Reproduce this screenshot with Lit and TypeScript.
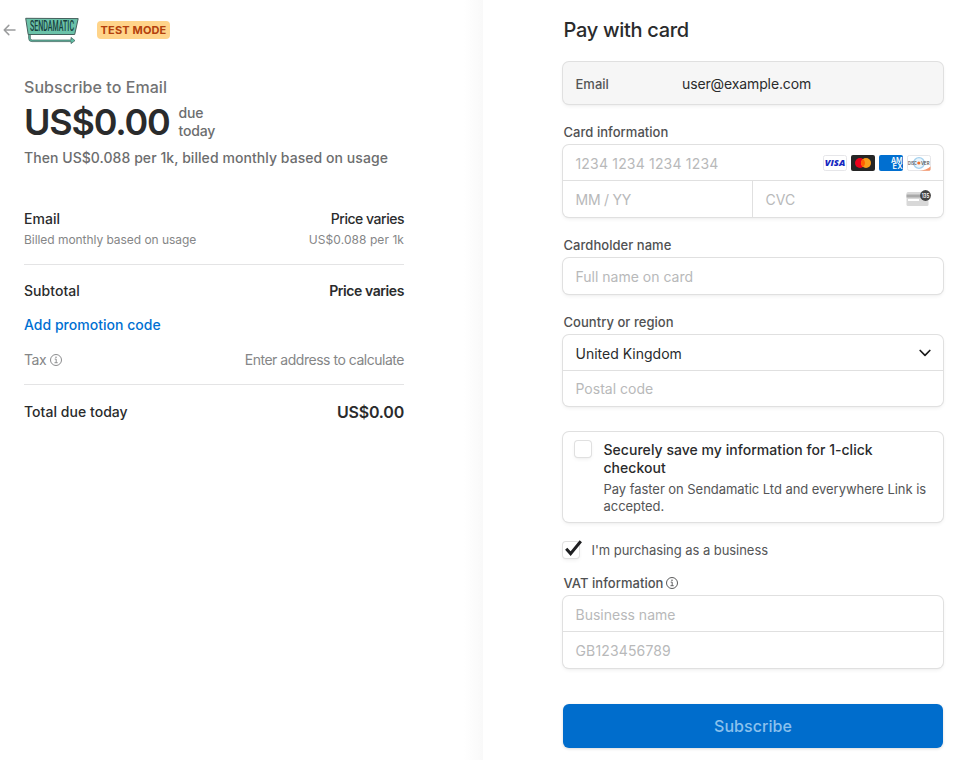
import { LitElement, html, css, svg } from "lit";
import { customElement } from "lit/decorators.js";

const infoIcon = html`<svg class="info" width="12" height="12" viewBox="0 0 12 12" fill="none" stroke="currentColor">
  <circle cx="6" cy="6" r="5.5" stroke-width="0.95" />
  <path d="M4.7 5.1h1.5v3.6M4.5 8.7h3.2" stroke-width="0.9" />
  <circle cx="6" cy="3.2" r="0.75" fill="currentColor" stroke="none" />
</svg>`;

const brandFrame = svg`<rect x="0.5" y="0.5" width="23" height="15" rx="1.8" fill="#fff" stroke="#e6e6e9" />`;

const visa = html`<svg width="24" height="16" viewBox="0 0 24 16">
  ${brandFrame}
  <text x="1.8" y="11.4" font-family="Open Sans" font-size="9" font-weight="800" font-style="italic" fill="#1527c0" textLength="20.4" lengthAdjust="spacingAndGlyphs">VISA</text>
</svg>`;

const mastercard = html`<svg width="24" height="16" viewBox="0 0 24 16">
  <rect width="24" height="16" rx="2" fill="#252525" />
  <circle cx="9" cy="8" r="5" fill="#eb001b" />
  <circle cx="15" cy="8" r="5" fill="#f79e1b" />
  <path d="M12 4a5 5 0 0 1 0 8a5 5 0 0 1 0-8z" fill="#ff5f00" />
</svg>`;

const amex = html`<svg width="24" height="16" viewBox="0 0 24 16">
  <rect width="24" height="16" rx="2" fill="#016fd0" />
  <text x="12" y="7.800" font-size="7" font-weight="600" fill="#fff" textLength="11.6" lengthAdjust="spacingAndGlyphs">AM</text>
  <text x="13.6" y="13.800" font-size="7" font-weight="600" fill="#fff" textLength="10" lengthAdjust="spacingAndGlyphs">EX</text>
</svg>`;

const discover = html`<svg width="24" height="16" viewBox="0 0 24 16">
  ${brandFrame}
  <path d="M12.5 15.8c4.500-.5 8-1.800 11-4.300v2.800a1.500 1.500 0 0 1-1.500 1.500z" fill="#f9966a" />
  <circle cx="12" cy="8" r="5.400" fill="#eaf5fc" stroke="#a3d0ee" stroke-width="1.300" />
  <text x="1" y="9.600" font-size="4.400" font-weight="600" fill="#555" textLength="8.800" lengthAdjust="spacingAndGlyphs">DISC</text>
  <circle cx="11.800" cy="8" r="1.600" fill="#f2712c" />
  <text x="14" y="9.600" font-size="4.400" font-weight="600" fill="#555" textLength="8.500" lengthAdjust="spacingAndGlyphs">VER</text>
</svg>`;

const cvcIcon = html`<svg width="25" height="17" viewBox="0 0 25 17">
  <rect x="0.500" y="2" width="22" height="14" rx="1.500" fill="#d8d8d8" />
  <rect x="0.500" y="4.500" width="22" height="3" fill="#a9a9a9" />
  <rect x="2" y="9" width="11" height="2" fill="#fff" />
  <circle cx="19.500" cy="5.500" r="5.400" fill="#424242" />
  <text x="15.700" y="7.900" font-size="6.600" font-weight="600" fill="#fff" textLength="7.600" lengthAdjust="spacingAndGlyphs">135</text>
</svg>`;

const logo = html`<svg width="54" height="27" viewBox="0 0 54 27">
  <path d="M5.300 17v4.200q0 1.800 2 1.800H46v-2.600l4 3.200-4 3v-2H7q-3.400 0-3.400-3.400V17z" fill="#5fbda4" stroke="#3c5b58" stroke-width="0.700" />
  <path d="M.7 1.300L53.200 1.600 49.700 17.500 3.200 17.500z" fill="#6bc2a9" stroke="#46605d" stroke-width="1" />
  <text x="5" y="14.300" font-family="Roboto" font-size="14.800" font-weight="500" fill="#173f3d" textLength="44" lengthAdjust="spacingAndGlyphs">SENDAMATIC</text>
</svg>`;

@customElement("summary-row")
export class SummaryRow extends LitElement {
  static styles = css`
    :host { display: flex; justify-content: space-between; align-items: center; }
  `;
  render() {
    return html`<slot name="label"></slot><slot name="value"></slot>`;
  }
}

@customElement("order-summary")
export class OrderSummary extends LitElement {
  static styles = css`
    :host { display: block; width: 380px; color: #2a2b2c; font-weight: 500; }
    svg { display: block; }
    .head { display: flex; align-items: center; height: 28px; margin-left: -21px; }
    .logo { margin-left: 9px; }
    .badge { margin-left: 18px; width: 73px; height: 18px; border-radius: 4px; background: #ffd48a;
      color: #b3400c; font-size: 11px; line-height: 19px; font-weight: 700; text-align: center; letter-spacing: .15px; white-space: nowrap; }
    .title { margin-top: 31px; height: 24px; line-height: 24px; font-size: 16px; color: #727374; letter-spacing: .06px; }
    .price { display: flex; height: 47px; align-items: center; gap: 9px; }
    .amount { font-size: 36px; font-weight: 600; line-height: 47px; letter-spacing: -1.22px; }
    .due { font-size: 14px; line-height: 18px; color: #6c6d6e; letter-spacing: -.2px; margin-top: -1.5px; }
    .then { height: 24px; line-height: 24px; font-size: 14px; color: #6c6d6e; letter-spacing: .06px; }
    .strong { font-size: 14px; line-height: 20px; letter-spacing: .04px; }
    .varies { letter-spacing: -.48px; }
    .semi { font-weight: 600; letter-spacing: -.42px; }
    .small { font-size: 12px; line-height: 16px; font-weight: 400; color: #858687; }
    .billed { letter-spacing: -.05px; }
    .per { letter-spacing: .06px; }
    .item { margin-top: 39px; }
    .detail { margin-top: 3px; }
    .line { height: 1px; background: #e4e4e5; }
    .l1 { margin-top: 16px; }
    .sub { margin-top: 16px; }
    .promo { margin-top: 14px; color: #0070d2; font-size: 14px; line-height: 20px; letter-spacing: .02px; }
    .tax { margin-top: 15px; font-size: 14px; line-height: 20px; font-weight: 400; color: #858687; }
    .taxlabel { display: flex; align-items: center; gap: 4px; letter-spacing: -.45px; }
    .enter { letter-spacing: -.48px; }
    .l2 { margin-top: 14px; }
    .total { margin-top: 17px; }
    .sum { font-size: 16px; font-weight: 600; letter-spacing: -.2px; }
  `;
  render() {
    return html`
      <div class="head">
        <svg width="13" height="12" viewBox="0 0 13 12" fill="none" stroke="#9b9c9d" stroke-width="1.500" stroke-linecap="round" stroke-linejoin="round">
          <path d="M12 6H1.200M5.800 1.400L1.200 6l4.600 4.600" />
        </svg>
        <div class="logo">${logo}</div>
        <div class="badge">TEST MODE</div>
      </div>
      <div class="title">Subscribe to Email</div>
      <div class="price"><span class="amount">US$0.00</span><span class="due">due<br />today</span></div>
      <div class="then">Then US$0.088 per 1k, billed monthly based on usage</div>
      <summary-row class="item strong"><span slot="label">Email</span><span slot="value" class="varies">Price varies</span></summary-row>
      <summary-row class="detail small"><span slot="label" class="billed">Billed monthly based on usage</span><span slot="value" class="per">US$0.088 per 1k</span></summary-row>
      <div class="line l1"></div>
      <summary-row class="sub strong"><span slot="label">Subtotal</span><span slot="value" class="semi">Price varies</span></summary-row>
      <div class="promo">Add promotion code</div>
      <summary-row class="tax"><span slot="label" class="taxlabel">Tax ${infoIcon}</span><span slot="value" class="enter">Enter address to calculate</span></summary-row>
      <div class="line l2"></div>
      <summary-row class="total strong"><span slot="label">Total due today</span><span slot="value" class="sum">US$0.00</span></summary-row>
    `;
  }
}

@customElement("payment-form")
export class PaymentForm extends LitElement {
  static styles = css`
    :host { display: block; width: 380px; color: #2a2b2c; font-size: 14px; }
    svg { display: block; }
    h1 { margin: 0; font-size: 20px; line-height: 28px; font-weight: 500; letter-spacing: -.3px; padding-left: .5px; }
    .box { border-radius: 6px; background: #fff; box-shadow: 0 0 0 1px #e0e0e0, 0 2px 4px rgba(0,0,0,.07), 0 1px 1.5px rgba(0,0,0,.05); }
    .email { margin-top: 18px; height: 42px; display: flex; align-items: center; background: #f6f6f6; }
    .email .k { width: 106.500px; padding-left: 12.500px; padding-top: 1px; font-size: 13px; font-weight: 500; color: #545556; }
    .mail { letter-spacing: -.12px; }
    .label { height: 20px; line-height: 20px; font-size: 13px; font-weight: 500; color: #505152; display: flex; align-items: center; gap: 4px; margin: 18px 0 3px; letter-spacing: .04px; padding-left: .5px; }
    .label.vat { margin-top: 14px; gap: 3px; }
    .row { height: 35px; box-sizing: border-box; padding: 1px 12px 0 12.5px; display: flex; align-items: center; justify-content: space-between; color: #b8b9ba; }
    .row + .row { border-top: 1px solid #e0e0e0; height: 37px; padding-top: 0; }
    .row.dark + .row { height: 36px; }
    .row.solo { height: 36px; }
    .split { border-top: 1px solid #e0e0e0; display: grid; grid-template-columns: 189px 1fr; }
    .split .row, .split .row + .row { border: 0; height: 36px; padding-top: 0; }
    .split .row + .row { border-left: 1px solid #e0e0e0; }
    .split .row svg { margin-top: -2px; }
    .num { letter-spacing: .18px; }
    .date { letter-spacing: -.25px; }
    .brands { display: flex; gap: 4px; margin-top: -1px; }
    .row.dark { color: #2a2b2c; }
    .vatno { letter-spacing: .15px; }
    .save { margin-top: 26px; height: 90px; box-sizing: border-box; padding: 9px 12px 0; display: flex; gap: 12.5px; }
    .check { width: 16px; height: 16px; border-radius: 3px; flex: none; background: #fff; box-shadow: 0 0 0 1px #e0e0e0, 0 2px 4px rgba(0,0,0,.07), 0 1px 1.5px rgba(0,0,0,.05); }
    .st { font-weight: 500; line-height: 18px; width: 300px; letter-spacing: .04px; }
    .sd { margin-top: 4px; font-size: 13px; line-height: 17px; color: #545556; white-space: nowrap; letter-spacing: -.05px; }
    .biz { margin-top: 19px; height: 18px; display: flex; align-items: center; gap: 12.5px; font-size: 13px; color: #545556; letter-spacing: -.05px; }
    .biz svg { overflow: visible; }
    .btn { margin-top: 36px; height: 44px; border-radius: 6px; background: #006dcc; color: #8bc1ed; font-size: 16px; font-weight: 500; letter-spacing: .05px; display: flex; align-items: center; justify-content: center; box-shadow: 0 1px 3px rgba(0,0,0,.15); }
  `;
  render() {
    return html`
      <h1>Pay with card</h1>
      <div class="box email"><span class="k">Email</span><span class="mail">user@example.com</span></div>
      <div class="label">Card information</div>
      <div class="box">
        <div class="row"><span class="num">1234 1234 1234 1234</span><span class="brands">${visa}${mastercard}${amex}${discover}</span></div>
        <div class="split"><div class="row"><span class="date">MM / YY</span></div><div class="row">CVC${cvcIcon}</div></div>
      </div>
      <div class="label">Cardholder name</div>
      <div class="box"><div class="row solo">Full name on card</div></div>
      <div class="label">Country or region</div>
      <div class="box">
        <div class="row dark">United Kingdom
          <svg width="12" height="8" viewBox="0 0 12 8" fill="none" stroke="#1a1a1a" stroke-width="1.700" stroke-linecap="round" stroke-linejoin="round"><path d="M1.200 1.500L6 6.300l4.800-4.800" /></svg>
        </div>
        <div class="row">Postal code</div>
      </div>
      <div class="box save">
        <div class="check"></div>
        <div><div class="st">Securely save my information for 1-click checkout</div>
        <div class="sd">Pay faster on Sendamatic Ltd and everywhere Link is<br />accepted.</div></div>
      </div>
      <div class="biz">
        <div class="check"><svg width="16" height="16" viewBox="0 0 16 16" fill="none" stroke="#1f2022" stroke-width="3"><path d="M3.200 6.800L7.600 11.600 17.800-.8" /></svg></div>
        <span>I'm purchasing as a business</span>
      </div>
      <div class="label vat">VAT information ${infoIcon}</div>
      <div class="box"><div class="row">Business name</div><div class="row"><span class="vatno">GB123456789</span></div></div>
      <div class="btn">Subscribe</div>
    `;
  }
}

@customElement("app-root")
export class AppRoot extends LitElement {
  static styles = css`
    :host { display: flex; height: 760px; overflow: hidden; background: #fff; font-family: Inter, "Liberation Sans", sans-serif; }
    .left { width: 483px; box-sizing: border-box; padding: 16px 0 0 24px; background: linear-gradient(90deg, transparent 464px, #f9f9f9 483px); }
    .right { padding: 16px 0 0 80px; }
  `;
  render() {
    return html`<div class="left"><order-summary></order-summary></div><div class="right"><payment-form></payment-form></div>`;
  }
}
